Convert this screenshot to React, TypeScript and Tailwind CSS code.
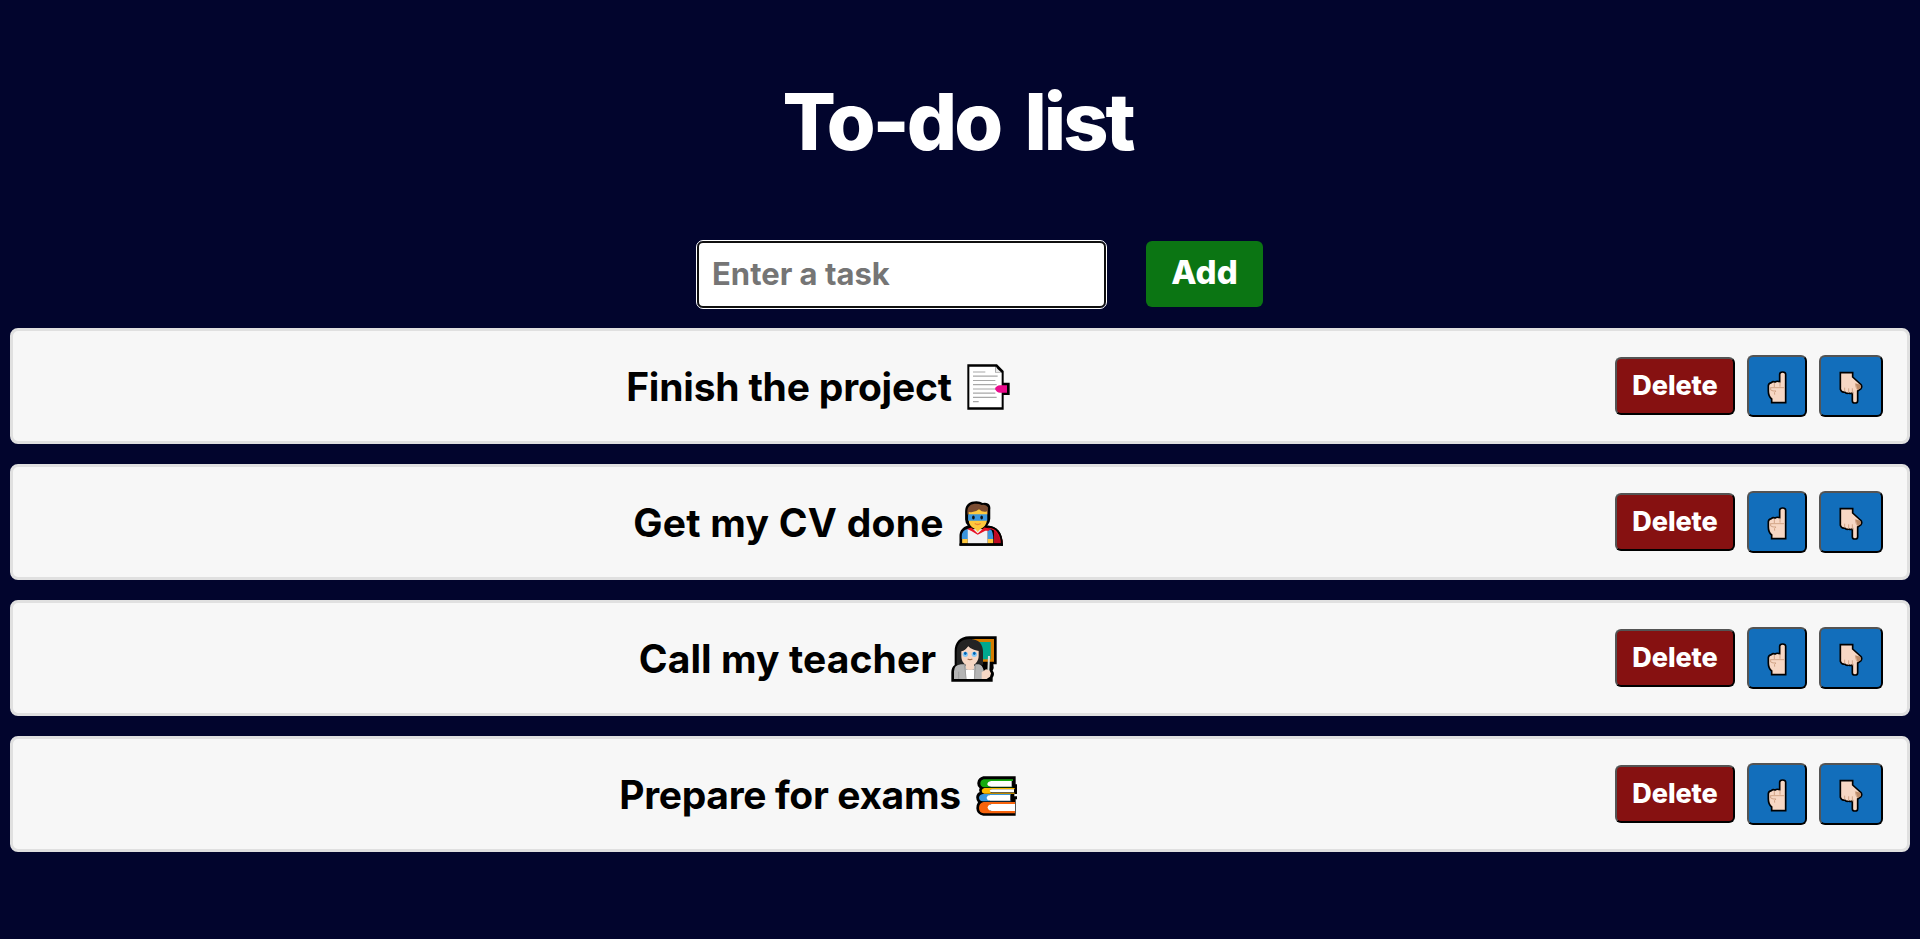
import React from "react";

function DocumentIcon() {
  return (
    <svg viewBox="51 42 129 138" className="h-[46px] w-[43px]">
      <path d="M52 43H141L161 63V98H179V135H161V179H52Z" fill="#000" />
      <path d="M58 50H137V68H155V172H58Z" fill="#fff" />
      <path d="M138 50V68H155L142 56Z" fill="#e9e9e9" />
      <path
        d="M69 66H106M69 78.500H143M69 91.500H136M69 104H140M69 117H140M69 129.500H136M69 142H140M69 155H86"
        stroke="#a8a8a8"
        strokeWidth="3.500"
      />
      <path d="M135 117Q139 106 150 106H171V128H150Q140 128 135 117Z" fill="#ea0b8c" />
    </svg>
  );
}

function HeroIcon() {
  return (
    <svg viewBox="52 36 132 136" className="h-[45px] w-[44px]">
      <path
        d="M53 171V142C53 126 62 115 78 110Q70 102 70 92V68C70 48 82 37 104 37Q116 37 123 42Q139 39 145 50Q147 55 146 62V90Q146 102 137 111C166 112 184 128 184 171Z"
        fill="#000"
      />
      <path d="M77 73C75 53 86 44 103 44Q113 44 120 48Q133 45 139 55V77H77Z" fill="#7b4c31" />
      <path d="M81 69Q100 72 112 61Q124 72 136 67V91C136 106 127 116 117 120L108 132L99 120C87 115 81 105 81 94Z" fill="#ffc83d" />
      <rect x="79" y="76" width="58" height="20" rx="2" fill="#3a96dd" />
      <ellipse cx="95" cy="86" rx="4" ry="6" fill="#111" />
      <ellipse cx="120" cy="86" rx="4" ry="6" fill="#111" />
      <path d="M99 104Q108 110 117 104" stroke="#ef8332" strokeWidth="4" fill="none" />
      <path d="M137 117C164 117 177 136 177 164H157V124Z" fill="#bd0b22" />
      <path d="M160 127C172 139 175 150 177 164H184C182 136 166 115 137 115Z" fill="#e81224" />
      <path d="M60 151V143Q60 124 79 120L79 151Z" fill="#3a96dd" />
      <path d="M138 122H148Q155 130 155 151H138Z" fill="#3a96dd" />
      <path d="M61 151H78V164H61ZM138 151H155V164H138Z" fill="#ffc83d" />
      <path d="M78 121H138V164H78Z" fill="#f1f1f3" />
      <path d="M76 121L89 116L108 134L128 116L146 119L142 126H131L108 138L89 127Z" fill="#e81224" />
      <path d="M97 116H120L108 130Z" fill="#ffc83d" />
      <path d="M181.500 171C181 132 162 114 137 113" stroke="#000" strokeWidth="6" fill="none" />
      <path d="M53 168H184" stroke="#000" strokeWidth="7" />
    </svg>
  );
}

function TeacherIcon() {
  return (
    <svg viewBox="30 36 138 138" className="h-[46px] w-[46px]">
      <path
        d="M31 173V145Q31 130 41 123V81C41 57 56 37 85 37H167V121H157Q160 132 155 140Q163 149 155 161V173Z"
        fill="#000"
      />
      <path d="M93 45H159V113H105Z" fill="#d67d00" />
      <path d="M93 54H149V106H105Z" fill="#00a88f" />
      <path d="M47 122V84C47 58 62 45 87 45C113 45 126 61 126 84V122Z" fill="#242424" />
      <path d="M61 82C70 80 76 75 81 66Q94 79 113 80V96C113 110 103 121 98 123V137H76V123C66 119 61 108 61 96Z" fill="#f7d7c4" />
      <path d="M58 79Q76 79 83 63Q94 78 115 80V66Q105 51 87 50Q63 53 58 70Z" fill="#242424" />
      <ellipse cx="73" cy="91" rx="8" ry="8" fill="#88c9f6" />
      <ellipse cx="100" cy="91" rx="8" ry="8" fill="#88c9f6" />
      <ellipse cx="73" cy="88" rx="4" ry="5" fill="#0063b1" />
      <ellipse cx="100" cy="88" rx="4" ry="5" fill="#0063b1" />
      <path d="M80 105Q87 109 94 105" stroke="#a06a4a" strokeWidth="4" fill="none" />
      <path d="M39 165V142Q39 123 60 121H71L87 139L104 121H114Q124 123 128 139V165Z" fill="#b4b4b4" />
      <path d="M75 138H99V165H75Z" fill="#fff" />
      <path d="M75 121H99V134Q87 141 75 134Z" fill="#f7d7c4" />
      <path d="M70 123L76 165M104 123L100 165M53 143V165" stroke="#8f8f8f" strokeWidth="2" />
      <path d="M144 96L142 144" stroke="#d9dfda" strokeWidth="6" />
      <path d="M122 145L135 136L145 139L150 148L147 158L137 165H122Z" fill="#f7d7c4" />
    </svg>
  );
}

function BooksIcon() {
  return (
    <svg viewBox="45 48 123 120" className="mt-[2px] h-[40px] w-[41px]">
      <path
        d="M67 49H164V73H168V102H160V109H168V118H164V167H67Q47 165 46 145Q46 134 51 127Q43 117 47 105Q50 97 56 96Q53 90 56 85Q48 80 49 68Q51 53 67 49Z"
        fill="#000"
      />
      <path d="M68 58H156V63H88Q79 71 87 80H155V82H70Q58 81 58 70Q58 61 68 58Z" fill="#16ab10" />
      <path d="M90 63H152V80H90Q79 78 79 72Q80 65 90 63Z" fill="#fff" />
      <path d="M70 84H161V88H89V98H161V101H70Q62 99 62 92Q63 86 70 84Z" fill="#ffb900" />
      <path d="M92 88H159V97H92Q86 96 86 92Q87 89 92 88Z" fill="#fff" />
      <path d="M66 102H149V105H84V122H151V124H66Q54 122 54 113Q55 104 66 102Z" fill="#3a96dd" />
      <path d="M87 105H148V122H87Q77 120 77 113Q78 106 87 105Z" fill="#fff" />
      <path d="M68 126H162V132H87V153H162V160H68Q54 158 54 144Q54 129 68 126Z" fill="#f7630c" />
      <path d="M92 132H162V153H92Q80 151 80 142Q81 134 92 132Z" fill="#fff" />
    </svg>
  );
}

function PointUpIcon() {
  return (
    <svg viewBox="82 62 60 99" className="h-[33px] w-[20px]">
      <path
        d="M120 94V72Q120 65 129 65Q138 65 138 72V157H96V146Q86 138 86 122V106Q87 98 95 97Q99 92 106 95Q112 91 120 94Z"
        fill="#f7d7c4"
        stroke="#000"
        strokeWidth="5"
      />
      <path d="M104 98V110M121 96V109M92 112H133M93 112V119Q99 123 109 122Q102 126 105 133" stroke="#d2a588" strokeWidth="3" fill="none" />
    </svg>
  );
}

function PointDownIcon() {
  return (
    <svg viewBox="298 61 72 99" className="h-[33px] w-[24px]">
      <path
        d="M302 66H339V79L362 100Q369 106 364 114L354 121V150Q354 157 346 157Q338 157 338 150V127Q332 130 327 127Q320 130 315 124Q306 127 302 116Z"
        fill="#f7d7c4"
        stroke="#000"
        strokeWidth="5"
      />
      <path d="M347 98L362 102Q367 109 361 114L353 119Z" fill="#bd8b68" />
      <path d="M315 111V123M327 113V127M338 113V128M347 99Q348 111 354 118" stroke="#d2a588" strokeWidth="3" fill="none" />
    </svg>
  );
}

const tasks = [
  { text: "Finish the project", icon: <DocumentIcon />, spacing: "tracking-[-0.2px]" },
  { text: "Get my CV done", icon: <HeroIcon />, spacing: "tracking-[0.25px]" },
  { text: "Call my teacher", icon: <TeacherIcon />, spacing: "tracking-[0.1px]" },
  { text: "Prepare for exams", icon: <BooksIcon />, spacing: "tracking-[-0.35px]" },
];

const buttonEdge =
  "rounded-[6px] border-2 border-t-[#545454] border-l-[#545454] border-r-black border-b-black";

export default function App() {
  return (
    <main className="flex h-[939px] flex-col overflow-hidden bg-[#02052d] px-[10px] font-['Inter',sans-serif] font-bold">
      <h1 className="mt-[73px] pr-[5px] text-center text-[79px] leading-[96px] font-extrabold tracking-[-3px] text-white [word-spacing:10px]">
        To-do list
      </h1>
      <div className="mt-[72px] ml-[687px] flex h-[66px] items-center gap-10">
        <input
          placeholder="Enter a task"
          className="h-[67px] w-[409px] rounded-[6px] border-2 border-[#101010] bg-white px-[13px] pb-[2px] text-[31px] text-black outline-1 outline-white placeholder:text-[#757575] placeholder:opacity-100"
        />
        <button className="h-[66px] w-[117px] rounded-[6px] bg-[#0b7513] pb-[2px] text-[33px] font-extrabold text-white">Add</button>
      </div>
      <ul className="mt-[21px] flex flex-col gap-5">
        {tasks.map((task) => (
          <li
            key={task.text}
            className="flex h-[116px] items-center rounded-[8px] border-3 border-[#e0e0e0] bg-[#f7f7f7] pr-6 pl-2"
          >
            <div className="flex flex-1 items-center justify-center gap-[15px] pt-[2px]">
              <span className={`text-[39px] leading-[48px] whitespace-nowrap text-black ${task.spacing}`}>{task.text}</span>
              {task.icon}
            </div>
            <div className="flex items-center gap-3">
              <button className={`h-[58px] w-[120px] bg-[#861111] text-[27px] font-extrabold tracking-[-0.1px] text-white ${buttonEdge}`}>Delete</button>
              <button className={`flex h-[62px] w-[60px] items-center justify-center bg-[#126ebb] pt-[3px] ${buttonEdge}`}>
                <PointUpIcon />
              </button>
              <button className={`flex h-[62px] w-[64px] items-center justify-center bg-[#126ebb] pt-[3px] ${buttonEdge}`}>
                <PointDownIcon />
              </button>
            </div>
          </li>
        ))}
      </ul>
    </main>
  );
}
